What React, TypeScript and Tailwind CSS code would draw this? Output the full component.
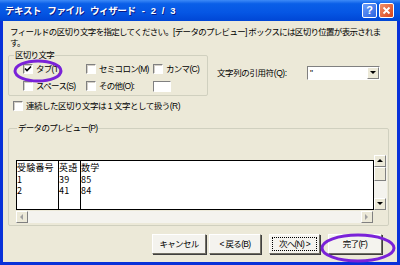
import React from 'react';

function Check({ checked }: { checked?: boolean }) {
  return (
    <span className="w-[10px] h-[10px] shrink-0 bg-white border border-t-[#808080] border-l-[#808080] border-b-white border-r-white shadow-[inset_1px_1px_0_#d4d0c8] flex items-center justify-center">
      {checked && (
        <svg width="8" height="8" viewBox="0 0 8 8">
          <path d="M1 3.5 L3 5.5 L7 1.5" stroke="#000" strokeWidth="1.6" fill="none" />
        </svg>
      )}
    </span>
  );
}

function Opt({ label, checked }: { label: string; checked?: boolean }) {
  return (
    <div className="flex items-center gap-[3px] h-[14px]">
      <Check checked={checked} />
      <span className="whitespace-nowrap">{label}</span>
    </div>
  );
}

function Arrow({ dir }: { dir: 'up' | 'down' | 'left' | 'right' }) {
  const pts = {
    up: '1,5 4,2 7,5',
    down: '1,2 4,5 7,2',
    left: '5,1 2,4 5,7',
    right: '2,1 5,4 2,7',
  }[dir];
  return (
    <svg width="8" height="8" viewBox="0 0 8 8">
      <polygon points={pts} fill={dir === 'up' || dir === 'down' ? '#000' : '#a0a0a0'} />
    </svg>
  );
}

function ScrollBtn({ dir }: { dir: 'up' | 'down' | 'left' | 'right' }) {
  return (
    <div className="w-[12px] h-[12px] shrink-0 bg-[#ece9d8] border border-t-white border-l-white border-b-[#808080] border-r-[#808080] flex items-center justify-center">
      <Arrow dir={dir} />
    </div>
  );
}

function Btn({ label, w, focus }: { label: string; w: string; focus?: boolean }) {
  return (
    <div className={`${w} h-[20px] p-[2px] bg-[#f4f3ee] border border-t-white border-l-white border-b-[#716f64] border-r-[#716f64] shadow-[1px_1px_0_#404040] flex`}>
      <div className={`flex-1 flex items-center justify-center leading-[11px] ${focus ? 'border border-dotted border-black' : ''}`}>{label}</div>
    </div>
  );
}

export default function App() {
  const rows = [
    ['受験番号', '英語', '数学'],
    ['1', '39', '85'],
    ['2', '41', '84'],
  ];
  return (
    <div className="relative w-[400px] h-[265px] bg-[#0831d9] flex flex-col overflow-hidden font-['Liberation_Sans','Noto_Sans_CJK_JP',sans-serif] text-[8.5px] leading-[11px] tracking-[-0.7px] text-black">
      {/* title bar */}
      <div className="h-[21px] shrink-0 flex items-center pl-[5px] pr-[6px] bg-[linear-gradient(180deg,#3d8af7_0%,#0a5fe8_18%,#0556e4_60%,#0046d5_100%)]">
        <span className="flex-1 text-white font-bold text-[9.5px] tracking-[-0.4px] [word-spacing:4px] [text-shadow:1px_1px_0_#0a1883]">テキスト ファイル ウィザード - 2 / 3</span>
        <div className="flex gap-[2px]">
          <div className="w-[15px] h-[15px] rounded-[2px] border border-white bg-[linear-gradient(135deg,#6e9ffb,#2a62e0)] flex items-center justify-center text-white font-bold text-[11px] leading-none tracking-normal">?</div>
          <div className="w-[15px] h-[15px] rounded-[2px] border border-white bg-[linear-gradient(135deg,#f0906a,#d8431b)] flex items-center justify-center">
            <svg width="9" height="9" viewBox="0 0 9 9">
              <path d="M1.5 1.5 L7.5 7.5 M7.5 1.5 L1.5 7.5" stroke="#fff" strokeWidth="1.8" />
            </svg>
          </div>
        </div>
      </div>

      {/* body */}
      <div className="flex-1 mx-[3px] mb-[3px] bg-[#ece9d8] flex flex-col">
        <div className="pt-[6px] pl-[7px]">
          <div className="whitespace-nowrap">フィールドの区切り文字を指定してください。[データのプレビュー] ボックスには区切り位置が表示されま</div>
          <div>す。</div>
        </div>

        <div className="flex mt-[1px]">
          <fieldset className="ml-[5px] w-[200px] border border-[#d0d0bf] rounded-[2px] pl-[14px] pb-[2px]">
            <legend className="ml-[-9px] px-[1px]">区切り文字</legend>
            <div className="grid grid-cols-[63px_67px_auto] mt-[1px] gap-y-[3px]">
              <Opt label="タブ(T)" checked />
              <Opt label="セミコロン(M)" />
              <Opt label="カンマ(C)" />
              <Opt label="スペース(S)" />
              <Opt label="その他(O):" />
              <div className="h-[11px] w-[18px] bg-white border border-t-[#808080] border-l-[#808080] border-b-white border-r-white self-center" />
            </div>
          </fieldset>
          <div className="flex items-center ml-[9px] mt-[16px] h-[14px]">
            <span className="w-[90px] whitespace-nowrap tracking-[-0.4px]">文字列の引用符(Q):</span>
            <div className="w-[73px] h-[14px] bg-white border border-t-[#808080] border-l-[#808080] border-b-white border-r-white flex items-center">
              <span className="flex-1 pl-[2px]">"</span>
              <div className="w-[12px] h-[12px] bg-[#ece9d8] border border-t-white border-l-white border-b-[#808080] border-r-[#808080] flex items-center justify-center">
                <Arrow dir="down" />
              </div>
            </div>
          </div>
        </div>

        <div className="mt-[3px] ml-[10px] tracking-[-0.5px]">
          <Opt label="連続した区切り文字は 1 文字として扱う(R)" />
        </div>

        <fieldset className="mt-[10px] ml-[5px] w-[381px] border border-[#d0d0bf] rounded-[2px] pl-[7px] pr-[1px] pb-[2px]">
          <legend className="ml-[1px] px-[1px]">データのプレビュー(P)</legend>
          <div className="flex mt-[21px]">
            <div className="flex-1 mt-[5px] h-[50px] bg-white border border-black flex text-[9px] tracking-[0.2px] font-['Noto_Sans_CJK_JP',monospace] leading-[11.5px]">
              {[0, 1, 2].map((c) => (
                <div key={c} className={c === 0 ? 'w-[42px] border-r border-black pt-[1px]' : c === 1 ? 'w-[22px] border-r border-black pt-[1px]' : 'flex-1 pt-[1px]'}>
                  {rows.map((r, i) => (
                    <div key={i} className="whitespace-nowrap">{r[c]}</div>
                  ))}
                </div>
              ))}
            </div>
            <div className="w-[13px] h-[55px] bg-[#f4f3ee] flex flex-col">
              <ScrollBtn dir="up" />
              <div className="w-[12px] h-[14px] bg-[#ece9d8] border border-t-white border-l-white border-b-[#808080] border-r-[#808080]" />
              <div className="flex-1" />
              <ScrollBtn dir="down" />
            </div>
          </div>
          <div className="mt-[1px] w-[357px] h-[12px] bg-[#f4f3ee] flex justify-between">
            <ScrollBtn dir="left" />
            <ScrollBtn dir="right" />
          </div>
        </fieldset>

        <div className="flex justify-end pr-[15px] mt-[8px] gap-[3px]">
          <Btn label="キャンセル" w="w-[54px]" />
          <Btn label="< 戻る(B)" w="w-[52px]" />
          <div className="w-[2px]" />
          <Btn label="次へ(N) >" w="w-[51px]" focus />
          <div className="w-[2px]" />
          <Btn label="完了(F)" w="w-[54px]" />
        </div>
      </div>

      {/* annotation ellipses */}
      <svg className="absolute left-0 top-0 pointer-events-none" width="400" height="265">
        <ellipse cx="38" cy="71" rx="23" ry="10" fill="none" stroke="#7a22d8" strokeWidth="3" />
        <ellipse cx="358" cy="248" rx="36" ry="13" fill="none" stroke="#7a22d8" strokeWidth="3" />
      </svg>
    </div>
  );
}
